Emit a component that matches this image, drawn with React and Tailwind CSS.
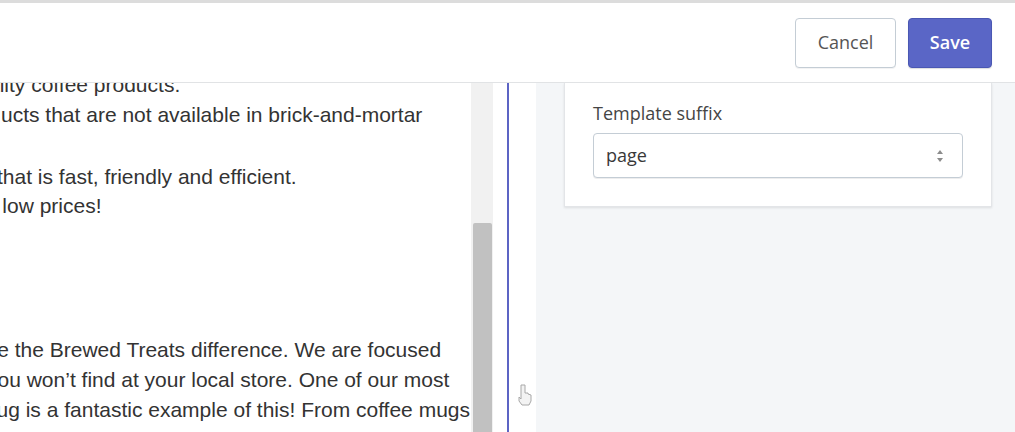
const lines = [
  { text: "ality coffee products.", ml: "-ml-[12px]", mt: "" },
  { text: "ucts that are not available in brick-and-mortar", ml: "ml-[1px]", mt: "" },
  { text: "that is fast, friendly and efficient.", ml: "-ml-[3px]", mt: "mt-[32px]" },
  { text: "at low prices!", ml: "-ml-[21px]", mt: "-mt-[1px]" },
  { text: "see the Brewed Treats difference. We are focused", ml: "-ml-[25px]", mt: "mt-[114px]" },
  { text: "you won\u2019t find at your local store. One of our most", ml: "-ml-[13px]", mt: "" },
  { text: "mug is a fantastic example of this! From coffee mugs", ml: "-ml-[21px]", mt: "" },
];

const App = () => {
  return (
    <div className="h-[432px] w-[1015px] overflow-hidden flex flex-col bg-white border-t-[3px] border-[#dcdcdc]">
      {/* Top bar */}
      <div className="h-[80px] shrink-0 flex items-center justify-end gap-3 pr-[23px] border-b border-[#e1e3e5] bg-white relative z-10 font-['Open_Sans',sans-serif]">
        <button className="h-[50px] w-[101px] rounded-[4px] border border-[#c4cdd5] bg-white text-[18px] text-[#555] shadow-[0_1px_0_rgba(22,29,37,0.05)]">
          Cancel
        </button>
        <button className="h-[50px] w-[84px] rounded-[4px] border border-[#4a57b3] bg-[#5a66c6] text-[18px] font-semibold text-white shadow-[0_1px_1px_rgba(22,29,37,0.15)]">
          Save
        </button>
      </div>

      <div className="flex-1 flex min-h-0">
        {/* Editor */}
        <div className="w-[471px] shrink-0 overflow-hidden">
          <div className="-mt-[13px] flex flex-col font-['Liberation_Sans',Arial,sans-serif] text-[21px] leading-[30px] text-[#333]">
            {lines.map((l, i) => (
              <div key={i} className={`whitespace-nowrap ${l.ml} ${l.mt}`}>
                {l.text}
              </div>
            ))}
          </div>
        </div>

        {/* Scrollbar */}
        <div className="w-[22px] shrink-0 bg-[#f1f1f1] flex justify-center">
          <div className="mt-[140px] w-[19px] bg-[#c1c1c1] rounded-t-[2px]"></div>
        </div>

        <div className="w-[14px] shrink-0 bg-white"></div>
        <div className="w-[2px] shrink-0 bg-[#5c64c4]"></div>
        <div className="w-[27px] shrink-0 bg-white relative">
          <svg
            className="absolute left-[8px] top-[300px]"
            width="16"
            height="24"
            viewBox="0 0 16 24"
            fill="none"
          >
            <path
              d="M4 2v14l-2-2v4l3 4h7l2-4v-6l-3-1v-1H8V2z"
              fill="#f3f3f3"
              stroke="#a8a8a8"
              strokeWidth="1"
            />
          </svg>
        </div>

        {/* Right panel */}
        <div className="flex-1 bg-[#f4f6f8] pl-[28px] pr-[23px]">
          <div className="bg-white border-x border-b border-[#e3e5e8] shadow-[0_1px_2px_rgba(63,63,68,0.12)] pt-[18px] pb-[28px] pl-[28px] pr-[28px] font-['Open_Sans',sans-serif]">
            <div className="text-[18px] leading-[24px] text-[#454545]">
              Template suffix
            </div>
            <div className="mt-[8px] h-[45px] flex items-center justify-between pl-[12px] pr-[18px] rounded-[4px] border border-[#c4cdd5] bg-white shadow-[0_1px_0_rgba(22,29,37,0.08)]">
              <span className="text-[18px] text-[#383838]">page</span>
              <svg width="8" height="14" viewBox="0 0 8 14">
                <path d="M4 1L7 5H1z" fill="#8c8c8c" />
                <path d="M4 13L7 9H1z" fill="#8c8c8c" />
              </svg>
            </div>
          </div>
        </div>
      </div>
    </div>
  );
};

export default App;
